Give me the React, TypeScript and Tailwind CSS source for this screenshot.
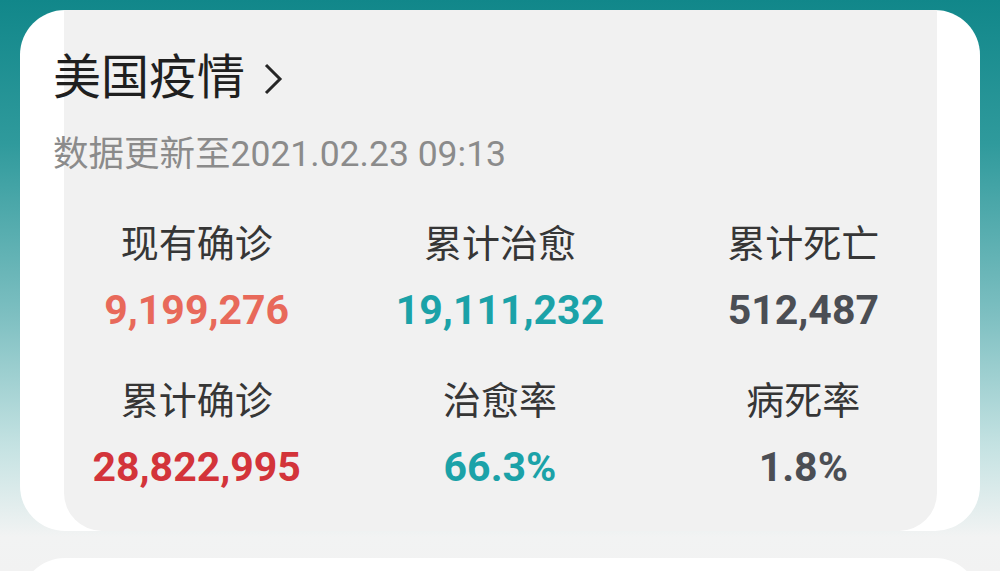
import React from 'react';

type Stat = { label: string; value: string; color: string };

const topRow: Stat[] = [
  { label: '现有确诊', value: '9,199,276', color: 'text-[#e8695a]' },
  { label: '累计治愈', value: '19,111,232', color: 'text-[#1ba2a8]' },
  { label: '累计死亡', value: '512,487', color: 'text-[#4b4e54]' },
];

const bottomRow: Stat[] = [
  { label: '累计确诊', value: '28,822,995', color: 'text-[#d3343a]' },
  { label: '治愈率', value: '66.3%', color: 'text-[#1ba2a8]' },
  { label: '病死率', value: '1.8%', color: 'text-[#4b4e54]' },
];

const StatRow = ({ items, first }: { items: Stat[]; first?: boolean }) => (
  <div className={`grid grid-cols-3 ${first ? 'mt-[53px]' : 'mt-[52px]'}`}>
    {items.map((s) => (
      <div key={s.label} className="flex flex-col items-center">
        <p className="text-[38px] leading-[38px] text-[#363636]">{s.label}</p>
        <p className={`mt-[27px] text-[41px] leading-[40px] font-bold ${s.color}`}>{s.value}</p>
      </div>
    ))}
  </div>
);

export default function App() {
  return (
    <div
      className="h-[571px] w-[1000px] overflow-hidden px-[20px] pt-[10px] bg-[linear-gradient(180deg,#11878a_0%,#2f9a9c_25%,#7dbfc1_55%,#c4e2e2_78%,#f2f3f3_94%,#f2f2f2_100%)]"
      style={{ fontFamily: 'Roboto, "Noto Sans CJK SC", sans-serif' }}
    >
      {/* Summary card */}
      <div className="relative h-[521px] rounded-[45px] bg-white">
        <div className="absolute top-0 bottom-0 left-[44px] right-[43px] rounded-b-[38px] bg-[#f1f1f1]"></div>
        <div className="relative px-[25px] pt-[44px]">
          <div className="flex items-center pl-[8px]">
            <h1 className="text-[48px] leading-[48px] text-[#1f1f1f]">美国疫情</h1>
            <svg width="20" height="34" viewBox="0 0 20 34" className="ml-[18px] mt-[2px]">
              <path d="M3 3 L17 17 L3 31" fill="none" stroke="#262626" strokeWidth="3" strokeLinejoin="miter" />
            </svg>
          </div>
          <p className="mt-[34px] pl-[8px] text-[35.5px] leading-[36px] text-[#8b8b8b]">数据更新至2021.02.23 09:13</p>

          <StatRow items={topRow} first />
          <StatRow items={bottomRow} />
        </div>
      </div>

      {/* Next card peeking in */}
      <div className="mt-[27px] h-[100px] rounded-[45px] bg-white"></div>
    </div>
  );
}
